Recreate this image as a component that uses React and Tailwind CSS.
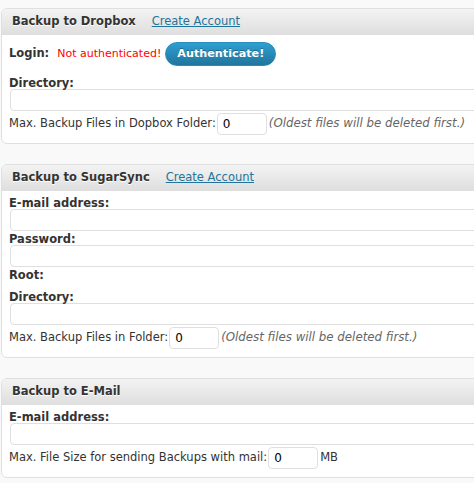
import React from 'react'

const font = { fontFamily: '"DejaVu Sans", Verdana, sans-serif' }

function Header({ title, link }) {
  return (
    <div className="flex items-center h-[26px] px-[10px] border-b border-[#dfdfdf] bg-gradient-to-b from-[#f3f3f3] to-[#dfdfdf] rounded-t-[5px]">
      <span className="text-[11.5px] font-bold text-[#333] [text-shadow:0_1px_0_#fff]">{title}</span>
      {link && (
        <a href="#" className="ml-4 text-[11.5px] text-[#21759b] underline">
          {link}
        </a>
      )}
    </div>
  )
}

function Label({ children }) {
  return <div className="h-[13px] leading-[15px] text-[11.5px] font-bold text-[#333]">{children}</div>
}

function TextInput() {
  return <div className="h-[22px] ml-px w-[520px] bg-white border border-[#dfdfdf] rounded-[4px]" />
}

function SmallInput() {
  return (
    <div className="h-[22px] w-[50px] bg-white border border-[#dfdfdf] rounded-[4px] flex items-center px-[5px] text-[12px] text-[#000]">
      0
    </div>
  )
}

function Card({ children }) {
  return (
    <div className="ml-px w-[520px] bg-white border border-[#dfdfdf] rounded-[6px]">
      {children}
    </div>
  )
}

export default function App() {
  return (
    <div className="w-[474px] h-[483px] overflow-hidden bg-[#f9f9f9] pt-[8px] text-[11.5px] text-[#333]" style={font}>
      <Card>
        <Header title="Backup to Dropbox" link="Create Account" />
        <div className="px-[7px] pt-[7px] pb-[8px]">
          <div className="flex items-center h-[24px]">
            <span className="font-bold">Login:</span>
            <span className="ml-[8px] text-[#ff0000] text-[11px]">Not authenticated!</span>
            <button className="ml-[4px] h-[24px] px-[11px] rounded-full bg-gradient-to-b from-[#2e9fd2] to-[#21759b] border border-[#298cba] text-white font-bold text-[11.2px] [text-shadow:0_-1px_0_rgba(0,0,0,0.3)]">
              Authenticate!
            </button>
          </div>
          <div className="mt-[10px]">
            <Label>Directory:</Label>
          </div>
          <TextInput />
          <div className="flex items-center mt-[2px] h-[22px]">
            <span>Max. Backup Files in Dopbox Folder:</span>
            <span className="ml-[1px]"><SmallInput /></span>
            <span className="ml-[2px] italic text-[#666] text-[11.8px]">(Oldest files will be deleted first.)</span>
          </div>
        </div>
      </Card>

      <div className="h-[20px]" />

      <Card>
        <Header title="Backup to SugarSync" link="Create Account" />
        <div className="px-[7px] pt-[5px] pb-[8px]">
          <Label>E-mail address:</Label>
          <TextInput />
          <div className="mt-px">
            <Label>Password:</Label>
          </div>
          <TextInput />
          <div className="mt-px">
            <Label>Root:</Label>
          </div>
          <div className="h-[9px]" />
          <Label>Directory:</Label>
          <TextInput />
          <div className="flex items-center mt-[2px] h-[22px]">
            <span>Max. Backup Files in Folder:</span>
            <span className="ml-[1px]"><SmallInput /></span>
            <span className="ml-[2px] italic text-[#666] text-[11.8px]">(Oldest files will be deleted first.)</span>
          </div>
        </div>
      </Card>

      <div className="h-[20px]" />

      <Card>
        <Header title="Backup to E-Mail" />
        <div className="px-[7px] pt-[5px] pb-[8px]">
          <Label>E-mail address:</Label>
          <TextInput />
          <div className="flex items-center mt-[2px] h-[22px]">
            <span>Max. File Size for sending Backups with mail:</span>
            <span className="ml-[1px]"><SmallInput /></span>
            <span className="ml-[2px]">MB</span>
          </div>
        </div>
      </Card>
    </div>
  )
}
